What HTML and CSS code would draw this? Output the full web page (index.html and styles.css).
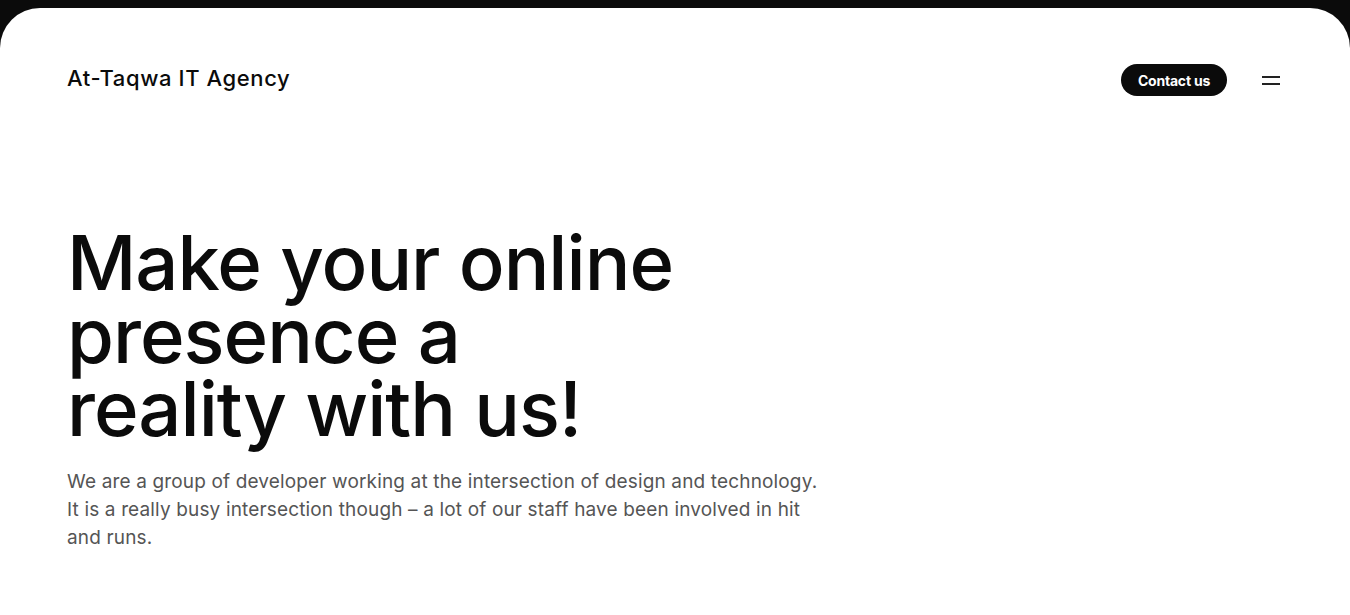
FILE: index.html
```html
<!DOCTYPE html>
<html lang="en">
<head>
<meta charset="utf-8">
<title>At-Taqwa IT Agency</title>
<link rel="stylesheet" href="styles.css">
</head>
<body>
<div class="card">
  <header class="nav">
    <div class="logo">At-Taqwa IT Agency</div>
    <div class="nav-right">
      <a class="contact" href="#">Contact us</a>
      <button class="menu" aria-label="Menu">
        <span class="bar"></span>
        <span class="bar"></span>
      </button>
    </div>
  </header>
  <section class="hero">
    <h1 class="title">Make your online<br>presence a<br>reality with us!</h1>
    <p class="lead">We are a group of developer working at the intersection of design and technology. It is a really busy intersection though – a lot of our staff have been involved in hit and runs.</p>
  </section>
</div>
</body>
</html>
```
FILE: styles.css
```css
* { box-sizing: border-box; }
html, body { margin: 0; padding: 0; }
body {
  background: #0b0b0b;
  font-family: Inter, "Noto Sans", sans-serif;
  color: #0b0b0b;
  height: 615px;
  overflow: hidden;
  padding-top: 8px;
}
.card {
  background: #fff;
  border-radius: 40px 40px 0 0;
  height: 607px;
  padding: 0 70px 0 67px;
}
.nav {
  display: flex;
  justify-content: space-between;
  align-items: center;
  height: 144px;
}
.logo {
  font-size: 22px;
  font-weight: 500;
  letter-spacing: 0.6px;
  margin-bottom: 4px;
}
.nav-right {
  display: flex;
  align-items: center;
  gap: 35px;
}
.contact {
  display: inline-flex;
  align-items: center;
  justify-content: center;
  height: 32px;
  width: 106px;
  border-radius: 16px;
  background: #0b0b0b;
  color: #fff;
  font-size: 14px;
  font-weight: 700;
  text-decoration: none;
  letter-spacing: -0.2px;
}
.menu {
  display: flex;
  flex-direction: column;
  gap: 5px;
  padding: 0;
  border: 0;
  background: none;
  width: 18px;
}
.bar {
  display: block;
  height: 2px;
  width: 18px;
  background: #222;
}
.hero {
  padding-top: 74px;
}
.title {
  margin: 0;
  font-size: 76px;
  font-weight: 500;
  line-height: 73px;
  letter-spacing: -1px;
}
.lead {
  margin: 23px 0 0;
  width: 765px;
  font-size: 19px;
  line-height: 28px;
  color: #555;
  letter-spacing: 0.15px;
}
```
